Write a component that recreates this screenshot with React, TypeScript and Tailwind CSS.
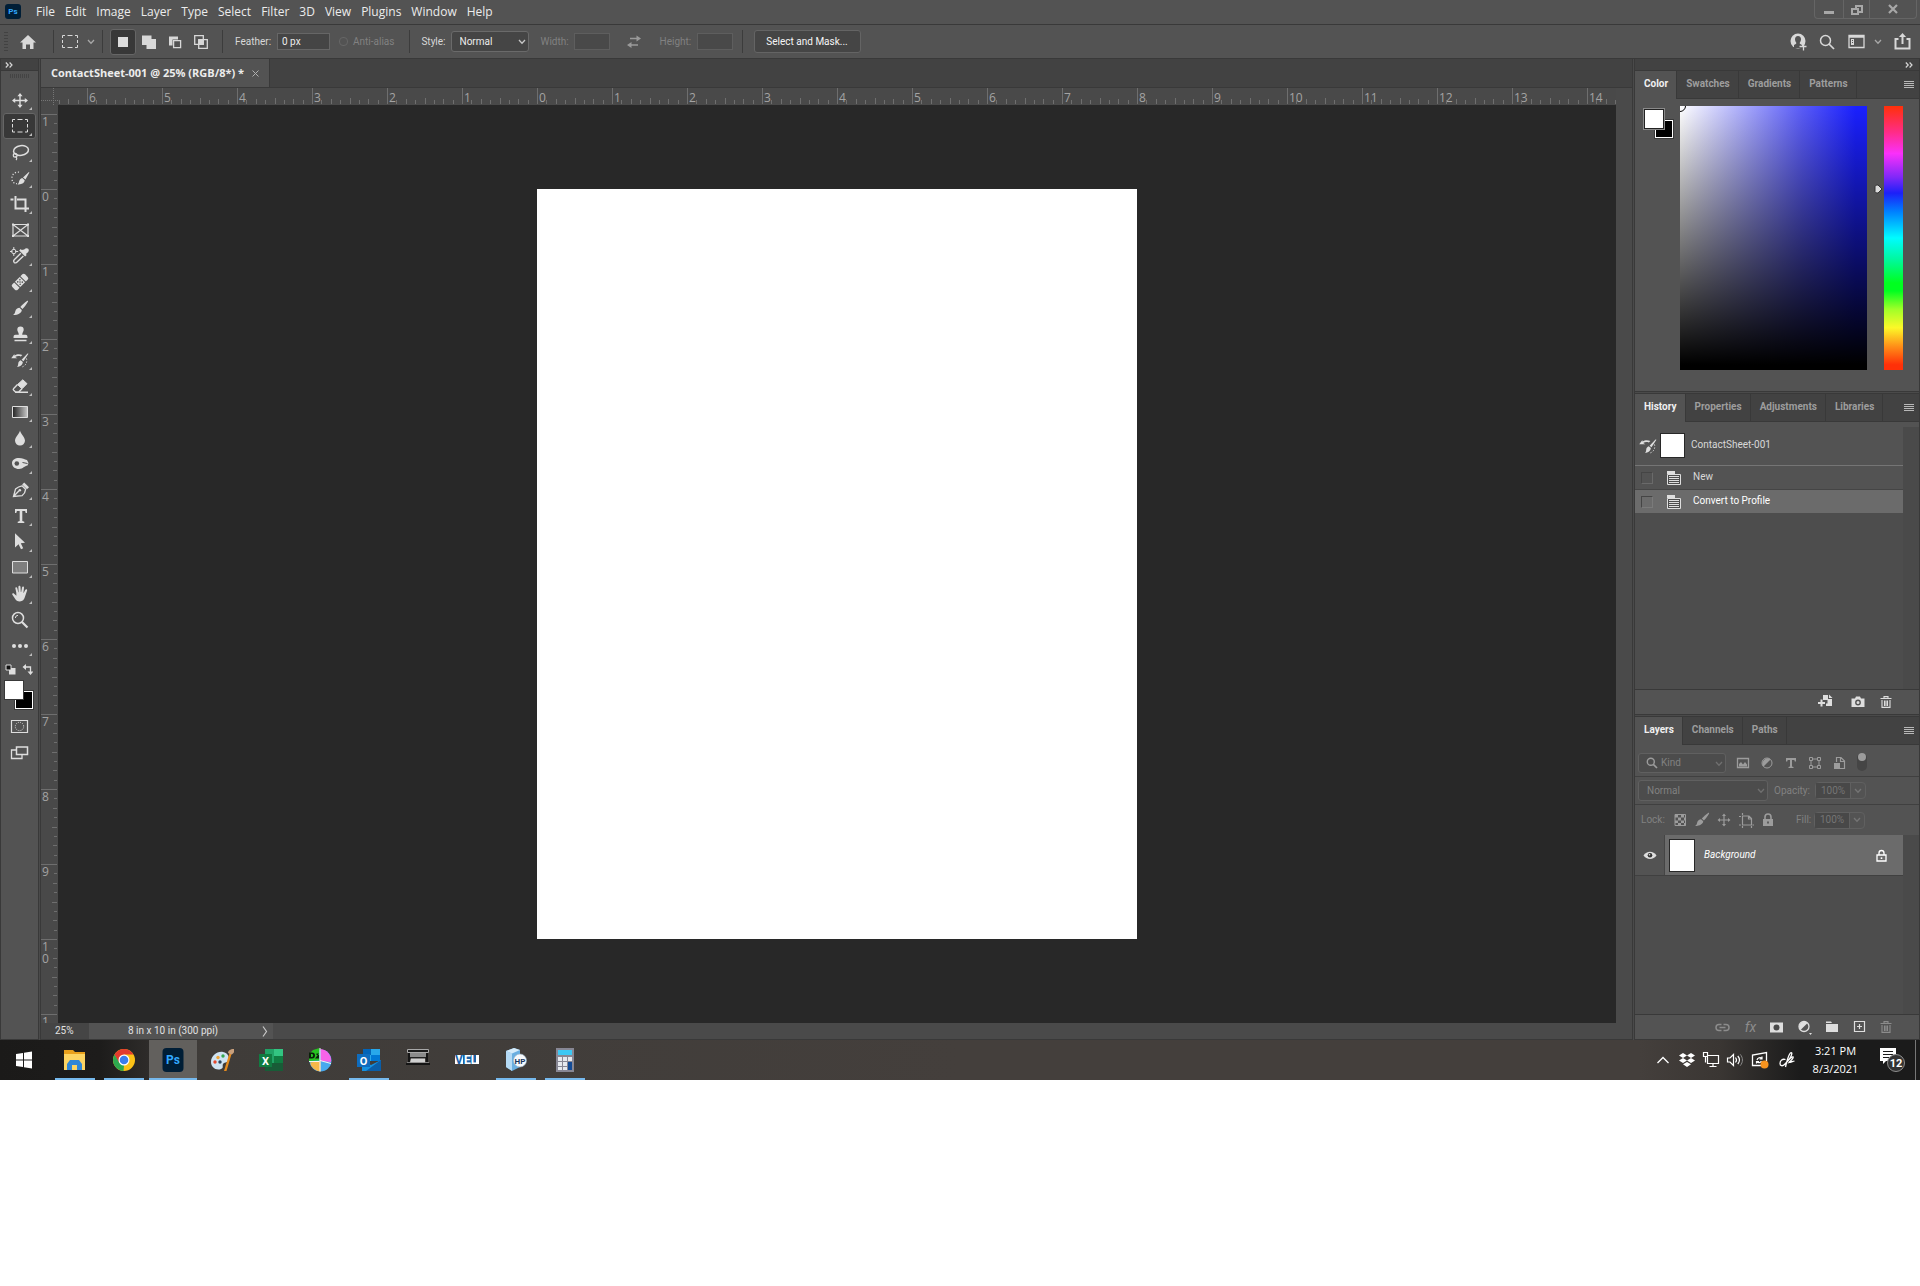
import React, { useState } from 'react';
import clsx from 'clsx';

const MENUS = ['File', 'Edit', 'Image', 'Layer', 'Type', 'Select', 'Filter', '3D', 'View', 'Plugins', 'Window', 'Help'];

const INCH = 75;

interface IconProps {
  size?: number;
  className?: string;
  children: React.ReactNode;
}

const Icon: React.FC<IconProps> = ({ size = 20, className, children }) => (
  <svg
    width={size}
    height={size}
    viewBox={`0 0 ${size} ${size}`}
    fill="none"
    stroke="currentColor"
    className={clsx('shrink-0', className)}
    aria-hidden="true"
  >
    {children}
  </svg>
);

const Chevron: React.FC<{ className?: string }> = ({ className }) => (
  <svg width="8" height="6" viewBox="0 0 8 6" fill="none" stroke="currentColor" strokeWidth="1.3" className={className} aria-hidden="true">
    <path d="M1 1l3 3.2L7 1" />
  </svg>
);

const DoubleChevron = () => (
  <svg width="8" height="6" viewBox="0 0 8 6" fill="none" stroke="#d6d6d6" strokeWidth="1.2" aria-hidden="true">
    <path d="M.8 .5L3.2 3 .8 5.500M4.600 .5L7 3 4.600 5.500" />
  </svg>
);

const Separator = () => <span className="h-[23px] w-px shrink-0 bg-[#3c3c3c]" />;

const BrushShape = () => (
  <path
    d="M17 3c.8-.5 1.300 0 .9.800-1.300 2.500-3.300 5-5.400 7.200L10.300 9C12.400 6.700 14.600 4.600 17 3zM9.500 9.700l2.300 2.200c-.1 2.700-3.300 5-8.800 5.100 1.500-1 1.900-1.900 2.300-3.700.5-2.200 2.300-3.500 4.200-3.600z"
    fill="currentColor"
    stroke="none"
  />
);

const HistoryBrushShape = () => (
  <>
    <path d="M17.500 3.500c.7-.3 1 .1.600.7l-4.600 7-1.900-1.500zM10.700 10.300l2.100 1.700c-.1 2.900-2.600 4.700-5.800 4.900 1-1 1-1.800 1.200-3.200.2-1.900 1.200-3 2.500-3.400z" fill="currentColor" stroke="none" />
    <path d="M1.200 8.200L4.400 4v1.400c3.100-1.800 5.800-1.200 8-.5l-1.600 1.500c-2.100-.7-4-.5-5.600.6l2.200 1.200z" fill="currentColor" stroke="none" />
    <path d="M16.500 8.500c.9 3.300-.5 7.300-4.500 8.500" strokeDasharray="1.200 1.800" />
  </>
);

interface Tool {
  id: string;
  icon: React.ReactNode;
  flyout?: boolean;
}

const TOOLS: Tool[] = [
  {
    id: 'Move',
    flyout: true,
    icon: (
      <>
        <path d="M10 4v12M3.500 10.500h13" strokeWidth="1.400" />
        <path d="M10 3l2.600 3.200H7.400zM10 18l-2.600-3.200h5.200zM2 10.500l3.200-2.600v5.200zM18 10.500l-3.200-2.600v5.200z" fill="currentColor" stroke="none" />
      </>
    ),
  },
  {
    id: 'Rectangular Marquee',
    flyout: true,
    icon: <path d="M2.500 6V3.500H5M7.500 3.500h5M15 3.500h2.500V6M17.500 8v3.500M17.500 13.500V16H15M12.500 16h-5M5 16H2.500v-2.500M2.500 11.500V8" />,
  },
  {
    id: 'Lasso',
    flyout: true,
    icon: (
      <>
        <ellipse cx="11" cy="8.500" rx="7.500" ry="4.800" strokeWidth="1.500" transform="rotate(-8 11 8.500)" />
        <circle cx="5.200" cy="13.300" r="1.900" strokeWidth="1.200" />
        <path d="M5.300 14.500c1.600.8 1.900 2.300.7 3.500" strokeWidth="1.200" />
      </>
    ),
  },
  {
    id: 'Quick Selection',
    flyout: true,
    icon: (
      <>
        <path d="M9 4.200A5.800 5.800 0 0 0 2 10.500C2 14 4.200 15.700 7 15.700" strokeDasharray="1.200 1.800" strokeWidth="1.300" />
        <path d="M18.600 4.200c.6-.3.900 0 .6.600l-3.700 6.800-2.500-2.200zM12.200 10l2.500 2.300c-.2 2.800-2.600 4.400-7.200 4.100 1.200-.8 1.300-1.700 1.600-2.900.4-1.900 1.500-3.200 3.100-3.500z" fill="currentColor" stroke="none" />
      </>
    ),
  },
  {
    id: 'Crop',
    flyout: true,
    icon: <path d="M.5 5.500h3M5.500 2v12.500h13.500M7 5.500h8.500V18" strokeWidth="2" />,
  },
  {
    id: 'Frame',
    icon: (
      <>
        <path d="M3 4.500h15v11.500H3zM3 4.500l15 11.500M18 4.500L3 16" strokeWidth="1.200" />
        <path d="M2 3.500h2v2H2zM17 3.500h2v2h-2zM2 15h2v2H2zM17 15h2v2h-2z" fill="currentColor" stroke="none" />
      </>
    ),
  },
  {
    id: 'Eyedropper',
    flyout: true,
    icon: (
      <>
        <circle cx="3.800" cy="5.500" r="2.200" />
        <path d="M3.800 1v3M3.800 7v3M-.5 5.500h3M5.200 5.500h3" />
        <path d="M14.200 3.600c1.200-1.500 3-1.800 4-.8s.7 2.800-.8 4l-1.500 1.200.8.900-1.600 1.500-5.900-5.800L10.800 3l.9.900z" fill="currentColor" stroke="none" />
        <path d="M10.800 7.300l-6.300 6.200c-1 1-.8 2.300-.3 2.900.7.700 2 .6 2.900-.3l6.300-6.200" strokeWidth="1.400" />
      </>
    ),
  },
  {
    id: 'Healing Brush',
    flyout: true,
    icon: (
      <g transform="rotate(-45 10 10)">
        <path d="M3 6.200h2.600v7.600H3a2 2 0 0 1-2-2V8.200a2 2 0 0 1 2-2zM14.400 6.200H17a2 2 0 0 1 2 2v3.600a2 2 0 0 1-2 2h-2.600z" fill="currentColor" stroke="none" />
        <path d="M6.600 6.200h6.800v7.600H6.600z" fill="currentColor" stroke="none" />
        <path d="M8.500 8.300h.1M11.500 8.300h.1M8.500 11.700h.1M11.500 11.700h.1M10 10h.1" stroke="#535353" strokeWidth="1.500" strokeLinecap="round" />
      </g>
    ),
  },
  { id: 'Brush', flyout: true, icon: <BrushShape /> },
  {
    id: 'Clone Stamp',
    flyout: true,
    icon: (
      <path d="M10.500 2.500a3.200 3.200 0 0 1 3.200 3.200c0 1.700-1.500 2.600-1.500 5H15.500c1.600 0 2 1.200 2 3.200H3.500c0-2 .4-3.200 2-3.200h3.300c0-2.400-1.500-3.300-1.500-5a3.200 3.200 0 0 1 3.200-3.200zM4.500 15.700h12V17.300h-12z" fill="currentColor" stroke="none" />
    ),
  },
  { id: 'History Brush', flyout: true, icon: <HistoryBrushShape /> },
  {
    id: 'Eraser',
    flyout: true,
    icon: (
      <>
        <path d="M12.800 3.800l4.200 3.900-5 5.100-4.500-4.200z" fill="currentColor" />
        <path d="M7.500 8.600l-3.800 3.800c-.6.600-.5 1.400 0 1.900l1.900 1.700h3L12 12.800M5 16.300h13" strokeWidth="1.400" />
      </>
    ),
  },
  {
    id: 'Gradient',
    flyout: true,
    icon: (
      <>
        <defs>
          <linearGradient id="tool-gradient">
            <stop offset="0" stopColor="#222" />
            <stop offset="1" stopColor="#c8c8c8" />
          </linearGradient>
        </defs>
        <path d="M2.500 4.500h15v11h-15z" fill="url(#tool-gradient)" />
      </>
    ),
  },
  { id: 'Blur', flyout: true, icon: <path d="M10 2.500c.6 3.600 5 6.500 5 10.300A4.900 4.900 0 0 1 10 17.500a4.900 4.900 0 0 1-5-4.700C5 9 9.400 6.100 10 2.500z" fill="currentColor" stroke="none" /> },
  {
    id: 'Dodge',
    flyout: true,
    icon: (
      <>
        <path d="M2 9c0-3 3-5 7-5 3.500 0 5.500 1.500 8 2l1.500 3-1 2.500c-3 .2-4.500 3.500-8.500 3.500C5 15 2 12.800 2 9z" fill="currentColor" stroke="none" />
        <circle cx="6.800" cy="9.500" r="2.300" fill="#535353" stroke="none" />
        <path d="M12.500 8.500l5 1" stroke="#535353" />
      </>
    ),
  },
  {
    id: 'Pen',
    flyout: true,
    icon: (
      <>
        <path d="M3.500 16.500L5.500 9c2-1.800 4-2.800 6.500-3.200l3.600 3.500c-.3 2.500-1.500 4.800-3.400 6.300zM3.500 16.500l5.300-5.500" strokeWidth="1.300" />
        <circle cx="9.800" cy="10.300" r="1.300" fill="currentColor" stroke="none" />
        <path d="M12.200 4.500l2-2 4.800 4.700-2 2z" fill="currentColor" stroke="none" />
      </>
    ),
  },
  { id: 'Type', flyout: true, icon: <path d="M5 3h12v4h-1.300l-.6-2H12.300v10l2 .7V17H7.700v-1.300l2-.7V5H6.900l-.6 2H5z" fill="currentColor" stroke="none" /> },
  { id: 'Path Selection', flyout: true, icon: <path d="M5 1.200l10 9.600-4.200.4 2.400 5-2.200 1-2.400-5L5 15.400z" fill="currentColor" stroke="none" /> },
  { id: 'Rectangle', flyout: true, icon: <path d="M2.500 3.500h15v11.500h-15z" fill="#7e7e7e" /> },
  {
    id: 'Hand',
    flyout: true,
    icon: (
      <path d="M6.300 8.800L5.400 4.600c-.3-1.400 1.500-1.800 1.900-.4l1 4.100.3-.1-.2-5.300c0-1.500 2-1.500 2.100 0l.3 5.200h.4l.8-4.700c.3-1.400 2.200-1.100 2 .4l-.6 4.900.4.100 1.500-3c.7-1.300 2.300-.5 1.800.8l-2.200 6.500c-.7 2.600-2.300 4.400-5 4.400-2.500 0-4-1-5-2.900L2.400 10.800c-.7-1.200.7-2.100 1.700-1.100l2.300 2z" fill="currentColor" stroke="none" />
    ),
  },
  {
    id: 'Zoom',
    icon: (
      <>
        <circle cx="8" cy="8" r="5.500" strokeWidth="1.500" />
        <path d="M5.300 8A2.900 2.900 0 0 1 8 5.300" />
        <path d="M12 12l5.500 5.500" strokeWidth="2.200" />
      </>
    ),
  },
  {
    id: 'More tools',
    flyout: true,
    icon: (
      <g fill="currentColor" stroke="none">
        <circle cx="4" cy="10" r="2" />
        <circle cx="10" cy="10" r="2" />
        <circle cx="16" cy="10" r="2" />
      </g>
    ),
  },
];

const HORIZONTAL_TICKS = Array.from({ length: 167 }, (_, i) => i - 51);
const VERTICAL_TICKS = Array.from({ length: 98 }, (_, i) => i - 8);

const tickLength = (n: number) => (n % 8 === 0 ? 17 : n % 4 === 0 ? 6 : n % 2 === 0 ? 5 : 4);

// Zero sits on the left edge of the page, which is centred in the canvas
const HorizontalRuler = () => (
  <svg className="h-[17px] min-w-0 flex-1" aria-hidden="true">
    <svg x="50%" overflow="visible">
      {HORIZONTAL_TICKS.map(n => {
        const x = Math.round((n * INCH) / 8) - 300;
        const len = tickLength(n);
        return (
          <g key={n}>
            <rect x={x} y={n % 8 === 0 ? 0 : 16 - len} width="1" height={n % 8 === 0 ? 16 : len} fill="#6e6e6e" />
            {n % 8 === 0 && (
              <text x={x + 2} y="14" fill="#a3a3a3" className="font-['Open_Sans',sans-serif] text-[12px]">
                {Math.abs(n / 8)}
              </text>
            )}
          </g>
        );
      })}
    </svg>
  </svg>
);

const VerticalRuler = () => (
  <svg className="w-[17px] shrink-0 self-stretch bg-[#494949]" aria-hidden="true">
    {VERTICAL_TICKS.map(n => {
      const y = Math.round((n * INCH) / 8) + 84;
      const len = n % 8 === 0 ? 16 : tickLength(n) - 1;
      // two-digit labels stack, and only the first digit of 11 is in view
      const digits = n === 88 ? ['1'] : String(Math.abs(n / 8)).split('');
      return (
        <g key={n}>
          <rect x={16 - len} y={y} width={len} height="1" fill="#6e6e6e" />
          {n % 8 === 0 && (
            <text fill="#a3a3a3" className="font-['Open_Sans',sans-serif] text-[12px]">
              {digits.map((digit, i) => (
                <tspan key={i} x="1" y={y + 12 + i * 12}>{digit}</tspan>
              ))}
            </text>
          )}
        </g>
      );
    })}
  </svg>
);

const MenuBar = () => (
  <header className="flex h-[25px] items-start border-b border-[#393939] bg-[#535353] pl-[5px]">
    <span className="mt-1 flex h-[15px] w-4 items-center justify-center rounded-[3px] bg-[#001e36] text-[8px] font-bold leading-none text-[#31a8ff]">Ps</span>
    <nav className="ml-[15px] flex h-6 items-center gap-[10px] font-['Open_Sans',sans-serif] text-[12px] leading-4 text-[#ececec]">
      {MENUS.map(menu => (
        <button key={menu} type="button">{menu}</button>
      ))}
    </nav>
    <div className="ml-auto mr-[3px] flex h-[19px] rounded-b-sm border border-t-0 border-[#656565] text-[#a8a8a8]">
      <button type="button" aria-label="Minimize" className="flex w-7 justify-center">
        <svg width="10" height="18" aria-hidden="true"><path d="M0 11h10v3H0z" fill="currentColor" /></svg>
      </button>
      <button type="button" aria-label="Restore" className="flex w-[27px] justify-center border-x border-[#656565]">
        <svg width="12" height="18" fill="none" stroke="currentColor" strokeWidth="2" aria-hidden="true">
          <path d="M5 8V6h6v6H8M1 9h6v5H1z" />
        </svg>
      </button>
      <button type="button" aria-label="Close" className="flex w-[46px] justify-center">
        <svg width="10" height="18" fill="none" stroke="currentColor" strokeWidth="2.200" aria-hidden="true"><path d="M1 5l8 8M9 5l-8 8" /></svg>
      </button>
    </div>
  </header>
);

const OptionsBar = () => (
  <div className="flex h-[34px] items-center border-b border-[#393939] bg-[#535353] text-[10px] leading-4 text-[#d8d8d8]">
    <span className="ml-1 h-5 w-1 bg-[repeating-linear-gradient(#424242_0_1px,transparent_1px_3px)]" />
    <button type="button" aria-label="Home" className="ml-3">
      <Icon size={16}><path d="M8 1l8 7.500h-2.500V15H10v-4.500H6V15H2.500V8.500H0z" fill="currentColor" stroke="none" /></Icon>
    </button>
    <span className="w-[17px]" />
    <Separator />
    <button type="button" aria-label="Tool presets" className="ml-2 flex items-center gap-[9px]">
      <Icon size={16}><path d="M.5 4V1.500H3M5.500 1.500h5M13 1.500h2.500V4M15.500 6v3M15.500 11v2.500H13M10.500 13.500h-5M3 13.500H.5V11M.5 9V6" /></Icon>
      <Chevron className="text-[#a8a8a8]" />
    </button>
    <span className="w-[7px]" />
    <Separator />
    <button type="button" aria-label="New selection" className="ml-[7px] flex h-[26px] w-[26px] items-center justify-center rounded-[3px] border border-[#666] bg-[#383838]">
      <span className="h-[10px] w-[10px] bg-[#dcdcdc]" />
    </button>
    <div className="ml-[5px] flex gap-[10px]">
      <button type="button" aria-label="Add to selection">
        <Icon size={16}><path d="M1 1.500h9.500v3.500H15v10H5.500v-4H1z" fill="currentColor" stroke="none" /></Icon>
      </button>
      <button type="button" aria-label="Subtract from selection">
        <Icon size={16}>
          <path d="M2 2.500h9v3H5.500v6H2z" fill="currentColor" stroke="none" />
          <path d="M6.600 6.600h7v7h-7z" strokeWidth="1.300" />
        </Icon>
      </button>
      <button type="button" aria-label="Intersect with selection">
        <Icon size={16}>
          <path d="M1.700 1.700h8.600v8.600H1.700zM5.700 5.700h8.600v8.600H5.700z" strokeWidth="1.300" />
          <path d="M6 6h4.300v4.300H6z" fill="currentColor" />
        </Icon>
      </button>
    </div>
    <span className="w-[13px]" />
    <Separator />
    <label htmlFor="feather" className="ml-3 w-[38px]">Feather:</label>
    <input id="feather" defaultValue="0 px" className="ml-1 h-[17px] w-[53px] border border-[#666] bg-[#454545] px-1 text-[#ececec]" />
    <label className="ml-[9px] flex items-center gap-[5px] text-[#818181]">
      <input type="checkbox" disabled className="h-[9px] w-[9px] appearance-none rounded-sm border border-[#666]" />
      Anti-alias
    </label>
    <span className="w-[15px]" />
    <Separator />
    <label htmlFor="style" className="ml-[11px]">Style:</label>
    <div className="relative ml-[5px]">
      <select id="style" className="block h-[21px] w-[78px] appearance-none rounded-[3px] border border-[#6a6a6a] bg-[#454545] pl-2 text-[#ececec]">
        <option>Normal</option>
        <option>Fixed Ratio</option>
        <option>Fixed Size</option>
      </select>
      <Chevron className="pointer-events-none absolute right-[3px] top-2 text-[#c8c8c8]" />
    </div>
    <label htmlFor="width" className="ml-3 w-[30px] text-[#818181]">Width:</label>
    <input id="width" disabled className="ml-[3px] h-[17px] w-9 border border-[#5e5e5e] bg-[#494949]" />
    <button type="button" aria-label="Swap width and height" className="ml-4 text-[#9a9a9a]">
      <Icon size={16}>
        <path d="M4 4.500h8M4 11h8" strokeWidth="1.400" />
        <path d="M10.500 1.500L15 4.500l-4.500 3zM5.500 8L1 11l4.500 3z" fill="currentColor" stroke="none" />
      </Icon>
    </button>
    <label htmlFor="height" className="ml-[18px] w-[33px] text-[#818181]">Height:</label>
    <input id="height" disabled className="ml-1 h-[17px] w-9 border border-[#5e5e5e] bg-[#494949]" />
    <span className="w-[9px]" />
    <Separator />
    <button type="button" className="ml-[11px] h-[23px] w-[107px] rounded-[3px] border border-[#646464] bg-[#454545] text-center text-[#f5f5f5]">Select and Mask...</button>

    <div className="ml-auto mr-[9px] flex items-center">
      <button type="button" aria-label="Account" className="mr-[11px]">
        <Icon size={18}>
          <circle cx="8" cy="8" r="7.500" fill="currentColor" stroke="none" />
          <path d="M8 3c2 0 3 1.300 3 3.200 0 1.600-.7 2.500-1.200 3.300v1.300L12 12v3H4v-3l2.200-1.200V9.500C5.700 8.700 5 7.800 5 6.200 5 4.300 6 3 8 3z" fill="#535353" stroke="none" />
          <path d="M9.500 13.500h7M13.500 10.500v7" strokeWidth="1.300" />
        </Icon>
      </button>
      <button type="button" aria-label="Search" className="mr-[13px]">
        <Icon size={16}>
          <circle cx="6.500" cy="6.500" r="5" strokeWidth="1.500" />
          <path d="M10 10l5 5" strokeWidth="1.700" />
        </Icon>
      </button>
      <button type="button" aria-label="Workspace" className="flex items-center gap-[9px]">
        <Icon size={17}>
          <path d="M1 2.500h15v12H1zM1 4h15" strokeWidth="1.300" />
          <path d="M3 6h3v6H3z" fill="currentColor" stroke="none" />
          <path d="M4 7.500h1M4 9.500h1" stroke="#535353" />
        </Icon>
        <Chevron className="text-[#a8a8a8]" />
      </button>
      <button type="button" aria-label="Share" className="ml-3">
        <Icon size={17}>
          <path d="M4.500 6H1.500v9.500h14V6h-3" strokeWidth="2" />
          <path d="M8.500 2.500v8.500" strokeWidth="2" />
          <path d="M8.500 0l3.600 4H4.900z" fill="currentColor" stroke="none" />
        </Icon>
      </button>
    </div>
  </div>
);

const Toolbar = () => {
  const [active, setActive] = useState('Rectangular Marquee');

  return (
    <aside className="flex w-[39px] shrink-0 flex-col border-x border-b border-[#393939] bg-[#535353] text-[#dedede]">
      <div className="flex h-3 items-center border-b border-[#393939] bg-[#424242] pl-1"><DoubleChevron /></div>
      <div className="flex h-4 justify-center pt-[3px]">
        <span className="h-1 w-[19px] bg-[repeating-linear-gradient(to_right,#444_0_1px,transparent_1px_2px)]" />
      </div>
      {TOOLS.map(tool => (
        <button
          key={tool.id}
          type="button"
          aria-label={tool.id}
          onClick={() => setActive(tool.id)}
          className={clsx(
            'relative ml-[2px] flex h-[26px] w-[33px] items-center justify-center rounded-[3px] border',
            active === tool.id ? 'border-[#666] bg-[#383838]' : 'border-transparent'
          )}
        >
          <Icon>{tool.icon}</Icon>
          {tool.flyout && (
            <svg width="3" height="3" className="absolute bottom-[2px] right-[3px]" aria-hidden="true"><path d="M3 0v3H0z" fill="#bdbdbd" /></svg>
          )}
        </button>
      ))}
      <div className="flex h-[21px] items-center justify-between pl-1 pr-[5px]">
        <button type="button" aria-label="Default colors">
          <Icon size={11}>
            <path d="M4 4h6.500v6.500H4z" fill="currentColor" stroke="none" />
            <path d="M1 1h5v5H1z" fill="#111" />
          </Icon>
        </button>
        <button type="button" aria-label="Switch colors">
          <Icon size={11}>
            <path d="M2.500 3h6v5.500" strokeWidth="1.300" />
            <path d="M4 0v6L.5 3zM5.500 7.500h6l-3 3.500z" fill="currentColor" stroke="none" />
          </Icon>
        </button>
      </div>
      <div className="relative ml-[3px] h-[30px] w-[30px]">
        <button type="button" aria-label="Background color" className="absolute bottom-0 right-0 h-5 w-5 border border-[#393939] bg-black shadow-[inset_0_0_0_1px_white]" />
        <button type="button" aria-label="Foreground color" className="absolute left-0 top-0 h-5 w-5 border border-[#393939] bg-white" />
      </div>
      <button type="button" aria-label="Quick mask" className="ml-[9px] mt-[6px]">
        <Icon>
          <path d="M1.500 4.500h16v12h-16z" strokeWidth="1.200" />
          <circle cx="9.500" cy="10.500" r="4.200" strokeDasharray="1 1.200" />
        </Icon>
      </button>
      <button type="button" aria-label="Screen mode" className="ml-[9px] mt-[6px]">
        <Icon>
          <path d="M6 8H1.500v8.500H12V13" strokeWidth="1.300" />
          <path d="M6.500 5h11v7.500h-11z" strokeWidth="1.500" />
        </Icon>
      </button>
    </aside>
  );
};

const DocumentArea = () => (
  <main className="flex min-w-0 flex-1 flex-col border-x border-b border-[#393939] bg-[#494949]">
    <div className="flex h-[29px] border-b border-[#393939] bg-[#424242]">
      <div className="flex items-center gap-2 border-r border-[#393939] bg-[#535353] px-[10px] font-['Open_Sans',sans-serif] text-[11px] font-bold leading-4 text-[#ececec]">
        <span className="whitespace-nowrap">ContactSheet-001 @ 25% (RGB/8*) *</span>
        <button type="button" aria-label="Close document">
          <svg width="7" height="7" stroke="#b0b0b0" aria-hidden="true"><path d="M.5 .5l6 6M6.500 .5l-6 6" /></svg>
        </button>
      </div>
    </div>
    <div className="flex">
      <div className="min-w-0 flex-1">
        <div className="flex bg-[#494949]">
          <svg width="17" height="17" stroke="#757575" strokeDasharray="1 1" className="shrink-0" aria-hidden="true">
            <path d="M12.500 0v17M0 12.500h17" />
          </svg>
          <HorizontalRuler />
        </div>
        <div className="flex">
          <VerticalRuler />
          <div className="flex flex-1 justify-center bg-[#282828] py-[84px]">
            <div className="h-[750px] w-[600px] bg-white" />
          </div>
        </div>
      </div>
      <div className="w-4 shrink-0 bg-[#4a4a4a]" />
    </div>
    <div className="flex h-4 items-center bg-[#4a4a4a] text-[10px] leading-4 text-[#e0e0e0]">
      <span className="w-12 self-stretch bg-[#454545] pl-[14px]">25%</span>
      <button type="button" className="flex w-[184px] items-center self-stretch bg-[#535353] pl-[39px] pr-[5px]">
        <span>8 in x 10 in (300 ppi)</span>
        <svg width="6" height="11" fill="none" stroke="#c8c8c8" strokeWidth="1.200" className="ml-auto" aria-hidden="true"><path d="M1 .5l3.500 5L1 10.500" /></svg>
      </button>
    </div>
  </main>
);

const PanelTabs: React.FC<{ tabs: string[] }> = ({ tabs }) => (
  <div className="flex h-7 shrink-0 bg-[#424242] font-bold">
    {tabs.map((tab, i) => (
      <button
        key={tab}
        type="button"
        className={clsx(
          'border-r border-[#393939] pl-[9px] pr-2',
          i === 0 ? 'bg-[#535353] pb-[3px] text-[#f0f0f0]' : 'border-b pb-[2px] text-[#9d9d9d]'
        )}
      >
        {tab}
      </button>
    ))}
    <div className="flex flex-1 items-center justify-end border-b border-[#393939] pr-[5px]">
      <button type="button" aria-label="Panel menu">
        <svg width="10" height="8" className="block" aria-hidden="true"><path d="M0 0h10v1H0zM0 2h10v1H0zM0 4h10v1H0zM0 6h10v1H0z" fill="#b8b8b8" /></svg>
      </button>
    </div>
  </div>
);

const ColorPanel = () => (
  <section>
    <PanelTabs tabs={['Color', 'Swatches', 'Gradients', 'Patterns']} />
    <div className="flex pb-[21px] pl-2 pr-4 pt-[7px]">
      <div className="relative mt-[2px] h-[31px] w-[31px] shrink-0">
        <button type="button" aria-label="Background color" className="absolute bottom-0 right-0 h-5 w-5 border border-[#393939] bg-black shadow-[inset_0_0_0_1px_white]" />
        <button type="button" aria-label="Foreground color" className="absolute left-0 top-0 h-[22px] w-[22px] border border-[#8a8a8a] bg-white shadow-[inset_0_0_0_1px_#222]" />
      </div>
      <div className="relative ml-[6px] h-[264px] flex-1 overflow-hidden bg-[linear-gradient(to_top,black_2%,transparent),linear-gradient(to_right,white,#5a5cf8_65%,#1a20ff_94%)]">
        <span className="absolute -left-[6px] -top-[6px] h-3 w-3 rounded-full border border-black" />
      </div>
      <svg width="9" height="10" className="ml-[7px] mr-px mt-[78px] shrink-0" aria-hidden="true"><path d="M1 2.500L2.500 1H4l4 4-4 4H2.500L1 7.500z" fill="#dcdcdc" stroke="#333" /></svg>
      <div className="h-[264px] w-[19px] shrink-0 bg-[linear-gradient(#ff3008,#ff2c88_10%,#fa30fa_18%,#8028f8_27%,#1c20f8_33%,#0080ff_40%,#00fcff_50%,#00f8a0_58%,#00ff20_67%,#00ff20_70%,#a0ff28_77%,#fcf828_84%,#ff9018_91%,#ff3008_98%)]" />
    </div>
  </section>
);

const DocIcon = () => (
  <Icon size={16} className="text-[#dedede]">
    <path d="M1.500 4.500h13v10h-13z" fill="#4d4d4d" />
    <path d="M1 1h8v3H1z" fill="currentColor" stroke="none" />
    <path d="M3 6.500h10M3 8.500h10M3 10.500h10M3 12.500h10" />
  </Icon>
);

const TrashIcon = () => (
  <Icon size={12}>
    <path d="M.5 2.500h11M4 2V.600h4V2M2 4v7.400h8V4M4.500 4.500v5.500M6 4.500v5.500M7.500 4.500v5.500" strokeWidth="1.100" />
  </Icon>
);

const HistoryPanel = () => (
  <section className="flex flex-col">
    <PanelTabs tabs={['History', 'Properties', 'Adjustments', 'Libraries']} />
    <div className="mt-[5px] flex h-[262px] text-[#d8d8d8]">
      <div className="flex-1 bg-[#4d4d4d]">
        <div className="flex h-[39px] items-center border-b border-[#757575] bg-[#535353] pb-px pl-[3px]">
          <Icon size={20} className="text-[#dedede]"><HistoryBrushShape /></Icon>
          <span className="ml-[2px] h-[25px] w-[25px] border border-[#282828] bg-white" />
          <span className="ml-[6px] pb-px">ContactSheet-001</span>
        </div>
        <div className="flex h-6 items-center border-b border-[#454545] bg-[#535353] pl-[6px]">
          <input type="checkbox" aria-label="Source for history brush: New" className="h-3 w-3 appearance-none border border-b-[#6a6a6a] border-l-[#454545] border-r-[#6a6a6a] border-t-[#454545]" />
          <span className="ml-[13px]"><DocIcon /></span>
          <span className="ml-[11px] pb-px">New</span>
        </div>
        <div className="flex h-[23px] items-center bg-[#6b6b6b] pl-[6px] text-white">
          <input type="checkbox" aria-label="Source for history brush: Convert to Profile" className="h-3 w-3 appearance-none border border-b-[#7a7a7a] border-l-[#454545] border-r-[#7a7a7a] border-t-[#454545]" />
          <span className="ml-[13px]"><DocIcon /></span>
          <span className="ml-[11px] pb-px">Convert to Profile</span>
        </div>
      </div>
      <div className="w-4 bg-[#4a4a4a]" />
    </div>
    <div className="flex h-[25px] items-center justify-end border-t border-[#393939] pr-[27px] text-[#dedede]">
      <button type="button" aria-label="New document from state" className="mr-[18px]">
        <Icon size={16}>
          <path d="M6 1h5v4h4v7H9V9.500h1.500V6H6z" fill="currentColor" stroke="none" />
          <path d="M12 .5L15.500 4H12z" fill="currentColor" stroke="none" />
          <path d="M1 9h7M4.500 5.500v7" strokeWidth="2" />
        </Icon>
      </button>
      <button type="button" aria-label="New snapshot" className="mr-[15px]">
        <Icon size={14}>
          <path d="M.5 3.500H4L5 1.500h4l1 2h3.500V12H.5z" fill="currentColor" stroke="none" />
          <circle cx="7" cy="7.500" r="2.200" stroke="#535353" strokeWidth="1.400" />
        </Icon>
      </button>
      <button type="button" aria-label="Delete state"><TrashIcon /></button>
    </div>
  </section>
);

const PercentField: React.FC<{ id: string }> = ({ id }) => (
  <div className="flex h-[17px] w-[51px] shrink-0 items-center rounded-sm border border-[#606060] text-[#757575]">
    <input id={id} disabled defaultValue="100%" className="h-[15px] w-[35px] border-r border-[#606060] bg-[#484848] text-center" />
    <Chevron className="mx-auto" />
  </div>
);

const LayersPanel = () => (
  <section className="flex flex-1 flex-col text-[#818181]">
    <PanelTabs tabs={['Layers', 'Channels', 'Paths']} />
    <div className="flex h-8 items-end border-b border-[#404040] pb-[3px] pl-[3px] text-[#9c9c9c]">
      <div className="relative">
        <select aria-label="Filter type" className="block h-5 w-[88px] appearance-none rounded-[3px] border border-[#606060] bg-[#4c4c4c] pl-[22px] text-[#818181]">
          <option>Kind</option>
          <option>Name</option>
        </select>
        <Icon size={12} className="pointer-events-none absolute left-2 top-1">
          <circle cx="4.800" cy="4.800" r="3.500" strokeWidth="1.400" />
          <path d="M7.300 7.300l3.700 3.700" strokeWidth="1.700" />
        </Icon>
        <Chevron className="pointer-events-none absolute right-[3px] top-2 text-[#707070]" />
      </div>
      <div className="ml-[9px] flex items-center gap-[8px] pb-[2px]">
        <Icon size={16}>
          <path d="M2.500 3.500h11v9h-11z" strokeWidth="1.300" />
          <path d="M4 11.500V9l2-2 2 2.500L10 7l2 2.500v2z" fill="currentColor" stroke="none" />
        </Icon>
        <Icon size={16}>
          <circle cx="8" cy="8" r="5" />
          <path d="M11.500 4.500A5 5 0 0 0 4.500 11.500z" fill="currentColor" stroke="none" />
        </Icon>
        <Icon size={16}><path d="M3 3h10v3.500h-1.200L11.300 5H9v6.500l1.500.5v1H5.500v-1l1.500-.5V5H4.700l-.5 1.500H3z" fill="currentColor" stroke="none" /></Icon>
        <Icon size={16}>
          <path d="M4 4h8v8H4z" />
          <path d="M2.500 2.500h3v3h-3zM10.500 2.500h3v3h-3zM2.500 10.500h3v3h-3zM10.500 10.500h3v3h-3z" fill="#535353" />
        </Icon>
        <Icon size={16}>
          <path d="M5.500 7V2.500H10L13.500 6v7.500H9M9.500 2.500v4h4" strokeWidth="1.200" />
          <path d="M3 8h6v6H3z" fill="currentColor" stroke="none" />
        </Icon>
      </div>
      <button type="button" aria-label="Layer filtering" className="mb-[2px] ml-[10px] flex h-[18px] w-[10px] items-start justify-center rounded-full bg-[#454545]">
        <span className="h-2 w-2 rounded-full bg-[#9c9c9c]" />
      </button>
    </div>
    <div className="flex h-7 items-center border-b border-[#404040] pl-[3px]">
      <div className="relative">
        <select aria-label="Blend mode" disabled className="block h-[21px] w-[130px] appearance-none rounded-[3px] border border-[#606060] bg-[#4c4c4c] pl-2 text-[#818181] opacity-100">
          <option>Normal</option>
        </select>
        <Chevron className="pointer-events-none absolute right-[3px] top-2 text-[#707070]" />
      </div>
      <label htmlFor="opacity" className="ml-[6px] w-[41px]">Opacity:</label>
      <PercentField id="opacity" />
    </div>
    <div className="flex h-[30px] items-center pl-[6px] text-[#9c9c9c]">
      <span className="w-[31px] text-[#818181]">Lock:</span>
      <div className="flex items-center gap-[6px]">
        <Icon size={16}>
          <path d="M3 2.500h10.500v11H3z" />
          <path d="M3 2.500h3v3H3zM9 2.500h3v3H9zM6 5.500h3v3H6zM3 8.500h3v2.500H3zM9 8.500h3v2.500H9zM6 11h3v2.500H6zM12 5.500h2v3h-2zM12 11h2v2.500h-2z" fill="currentColor" stroke="none" />
        </Icon>
        <svg width="16" height="16" viewBox="2 2 17 17" aria-hidden="true"><BrushShape /></svg>
        <Icon size={16}>
          <path d="M8 3v10M3 8h10" strokeWidth="1.200" />
          <path d="M8 1.500l2 2.500H6zM8 14.500L6 12h4zM1.500 8L4 6v4zM14.500 8L12 6v4z" fill="currentColor" stroke="none" />
        </Icon>
        <Icon size={16}><path d="M4.500 4h6.500l2.500 2.500V13h-9zM4.500 1v2M1 4.500h2M13.500 14v2M4.500 14v2M1 13h2M14.500 13H16M10.500 4v3h3" strokeWidth="1.200" /></Icon>
        <Icon size={16}>
          <path d="M3 7h10v7H3z" fill="currentColor" stroke="none" />
          <path d="M5 7V5a3 3 0 0 1 6 0v2" strokeWidth="1.600" />
          <path d="M8 9.500v2" stroke="#4d4d4d" strokeWidth="1.600" />
        </Icon>
      </div>
      <label htmlFor="fill" className="ml-5 w-[18px] text-[#818181]">Fill:</label>
      <PercentField id="fill" />
    </div>
    <div className="flex flex-1">
      <div className="flex-1 bg-[#4d4d4d]">
        <div className="flex h-[41px] border-b border-[#404040]">
          <button type="button" aria-label="Layer visibility" className="flex w-[30px] items-center justify-center border-r border-[#454545] bg-[#535353] text-[#dedede]">
            <Icon size={14}>
              <path d="M.5 7.500C3.500 2.500 10.500 2.500 13.500 7.500 10.500 12 3.500 12 .5 7.500z" fill="currentColor" stroke="none" />
              <circle cx="7" cy="7.300" r="2.300" fill="#333" stroke="none" />
              <circle cx="6.500" cy="6.800" r=".8" fill="currentColor" stroke="none" />
            </Icon>
          </button>
          <div className="flex flex-1 items-center bg-[#6b6b6b] pl-1 pr-[15px] text-white">
            <span className="h-[33px] w-[26px] border border-[#282828] bg-white" />
            <span className="ml-[9px] italic">Background</span>
            <Icon size={13} className="ml-auto">
              <path d="M2 6h9v6H2zM4 6V4a2.500 2.500 0 0 1 5 0v2" strokeWidth="1.300" />
              <path d="M5.700 8.300h1.600v1.700H5.700z" fill="currentColor" stroke="none" />
            </Icon>
          </div>
        </div>
      </div>
      <div className="w-4 bg-[#4a4a4a]" />
    </div>
    <div className="flex h-[25px] items-center justify-end gap-[11px] border-t border-[#393939] pr-[27px] text-[#dedede]">
      <button type="button" aria-label="Link layers" className="mr-[2px] text-[#8c8c8c]">
        <Icon size={15}><path d="M6.500 4.500H4a3 3 0 0 0 0 6h2.500M8.500 4.500H11a3 3 0 0 1 0 6H8.500M4.500 7.500h6" strokeWidth="1.500" /></Icon>
      </button>
      <button type="button" aria-label="Layer style" className="w-[15px] text-[14px] italic leading-4 text-[#8c8c8c]">fx</button>
      <button type="button" aria-label="Add mask">
        <Icon size={15}>
          <path d="M1 2.500h13v10H1z" fill="currentColor" stroke="none" />
          <circle cx="7.500" cy="7.500" r="3" fill="#4a4a4a" stroke="none" />
        </Icon>
      </button>
      <button type="button" aria-label="Adjustment layer" className="ml-[2px]">
        <Icon size={16}>
          <circle cx="7" cy="7.500" r="5" strokeWidth="1.300" />
          <path d="M10.600 4A5 5 0 0 0 3.500 11z" fill="currentColor" stroke="none" />
          <path d="M12 14h3l-1.500 2z" fill="currentColor" stroke="none" />
        </Icon>
      </button>
      <button type="button" aria-label="New group">
        <Icon size={16}><path d="M2 2.500h5L8 4H2zM2 5h12v8H2z" fill="currentColor" stroke="none" /></Icon>
      </button>
      <button type="button" aria-label="New layer" className="mr-[2px]">
        <Icon size={16}><path d="M3.500 2.500h10v10h-10zM8.500 5v5M6 7.500h5" strokeWidth="1.200" /></Icon>
      </button>
      <button type="button" aria-label="Delete layer" className="text-[#8c8c8c]"><TrashIcon /></button>
    </div>
  </section>
);

const PanelGap = () => <div className="h-[3px] shrink-0 border-y border-[#393939] bg-[#4a4a4a]" />;

const Panels = () => (
  <aside className="flex w-[286px] shrink-0 flex-col border-x border-b border-[#393939] bg-[#535353] text-[10px] leading-4">
    <div className="flex h-3 items-center justify-end border-b border-[#393939] bg-[#424242] pr-[6px]"><DoubleChevron /></div>
    <ColorPanel />
    <PanelGap />
    <HistoryPanel />
    <PanelGap />
    <LayersPanel />
  </aside>
);

interface TaskbarApp {
  name: string;
  running?: boolean;
  active?: boolean;
  icon: React.ReactNode;
}

const TASKBAR_APPS: TaskbarApp[] = [
  {
    name: 'File Explorer',
    running: true,
    icon: (
      <>
        <path d="M1 2h9l2 2h10v4H1z" fill="#e8a01c" />
        <path d="M1 6h21v16H1z" fill="#fcd462" />
        <path d="M4 22v-6l3-4h9l3 4v6h-5v-5H9v5z" fill="#2f86d6" />
      </>
    ),
  },
  {
    name: 'Chrome',
    running: true,
    icon: (
      <>
        <circle cx="12" cy="12" r="11" fill="#fbc116" />
        <path d="M2.500 6.500A11 11 0 0 1 21.500 6.500H12L6.500 15z" fill="#e33b2e" />
        <path d="M2.500 6.500L7.300 14.800 12 17.500 11.500 23A11 11 0 0 1 2.500 6.500z" fill="#2da94f" />
        <circle cx="12" cy="12" r="5.500" fill="#fff" />
        <circle cx="12" cy="12" r="4.300" fill="#3b7ded" />
      </>
    ),
  },
  {
    name: 'Photoshop',
    running: true,
    active: true,
    icon: (
      <>
        <rect x="1.500" y="0" width="21" height="24" rx="4" fill="#001e36" />
        <text x="12" y="16" textAnchor="middle" fill="#31a8ff" className="text-[12px] font-bold">Ps</text>
      </>
    ),
  },
  {
    name: 'Paint',
    icon: (
      <>
        <path d="M1 14c0-6 6-11 12-10 5 1 7 5 5 9-1 2-4 1-5 3s1 4-2 5c-5 2-10-2-10-7z" fill="#cfe3f2" />
        <circle cx="5" cy="14" r="1.700" fill="#e5482d" />
        <circle cx="8" cy="9.500" r="1.700" fill="#f0a53a" />
        <circle cx="13" cy="8" r="1.700" fill="#36a852" />
        <circle cx="10" cy="14" r="1.700" fill="#27435c" />
        <path d="M19.500 5l2 1-5 17h-2.500z" fill="#e58b1e" />
        <path d="M18 5c0-2 2-4 6-4 .5 3 0 4-2.500 5.500z" fill="#c9a07c" />
      </>
    ),
  },
  {
    name: 'Excel',
    icon: (
      <>
        <path d="M6 1h18v22H6z" fill="#21a366" />
        <path d="M15 1h9v7h-9z" fill="#33c481" />
        <path d="M15 8h9v7h-9z" fill="#107c41" />
        <path d="M6 15h18v8H6z" fill="#185c37" />
        <path d="M0 6h13v13H0z" fill="#107c41" />
        <text x="6.500" y="16.500" textAnchor="middle" fill="#fff" className="text-[11px] font-bold">X</text>
      </>
    ),
  },
  {
    name: 'Color utility',
    icon: (
      <>
        <circle cx="12.500" cy="12.500" r="11" fill="#48a9ee" />
        <path d="M12.500 13V1a11.500 11.500 0 0 1 10.500 13z" fill="#f763e8" />
        <path d="M12.500 13L2 14.500a11 11 0 0 0 10.500 9z" fill="#f6b84a" />
        <path d="M11.500 12.500V0L5 2 1 6v7z" fill="#26c321" />
        <path d="M12 0v23.500M1 13.500h10.500M12 12.500l11 3" stroke="#f4f4f4" strokeWidth="1" fill="none" />
        <path d="M1 4.500h3c2 0 3 1.200 3 3s-1 3-3 3H1zM3 6v3h1c1.500 0 1.500-3 0-3zM11 5.500H8.500v1.500H11v3.500H7" fill="#0a1f0a" />
      </>
    ),
  },
  {
    name: 'Outlook',
    running: true,
    icon: (
      <>
        <path d="M6 1h17v12H6z" fill="#28a8ea" />
        <path d="M6 1h8v6H6z" fill="#0364b8" />
        <path d="M14 7h9v6h-9z" fill="#0078d4" />
        <path d="M5 13l9 4 10-5v11H5z" fill="#1590df" />
        <path d="M24 12L9 23h15z" fill="#0a5ea8" />
        <path d="M0 6h13v13H0z" fill="#0f6cbd" />
        <text x="6.500" y="16.500" textAnchor="middle" fill="#fff" className="text-[11px] font-bold">O</text>
      </>
    ),
  },
  {
    name: 'Plotter',
    icon: (
      <>
        <path d="M1.500 1.500h21v3h-21z" fill="#1b1b1b" stroke="#a8a8a8" />
        <path d="M4 5h16v4H4z" fill="#8b8b8b" />
        <path d="M2 5h2v9H2zM20 5h2v9h-2z" fill="#151515" />
        <path d="M4 9h16v1.500H4z" fill="#222" />
        <path d="M5 10.500h14v4H4z" fill="#d0d0d0" />
        <path d="M0 15h24v2H0z" fill="#151515" />
        <path d="M1 14.500h22" stroke="#9a9a9a" strokeWidth=".7" />
      </>
    ),
  },
  {
    name: 'VEL',
    icon: (
      <>
        <path d="M0 7h24v9H0z" fill="#fff" />
        <path d="M8 7h13v9H8z" fill="#1c64a8" />
        <text x="0" y="16" fill="#1c64a8" className="text-[12px] font-bold">V</text>
        <text x="9" y="16" fill="#fff" className="text-[12px] font-bold">EL</text>
      </>
    ),
  },
  {
    name: 'HP',
    running: true,
    icon: (
      <>
        <path d="M2 3l8-3 6 2v17l-8 4-6-4z" fill="#6aaee0" />
        <path d="M2 3l6 2.500V23l-6-4z" fill="#b4daf5" />
        <path d="M2 3l8-3 6 2-8 3.500z" fill="#d6ebf9" />
        <circle cx="16" cy="12.500" r="6.500" fill="#f6f9fc" stroke="#9db6c8" strokeWidth=".6" />
        <text x="16" y="15.500" textAnchor="middle" fill="#17365c" className="text-[8px] font-bold">HP</text>
      </>
    ),
  },
  {
    name: 'Calculator',
    running: true,
    icon: (
      <>
        <path d="M3 0h18v24H3z" fill="#878794" />
        <path d="M5 2h14v5H5z" fill="#3cc8f4" />
        <path d="M5 9h4v4H5zM10 9h4v4h-4zM15 9h4v4h-4zM5 14h4v4H5zM10 14h4v4h-4zM5 19h4v3H5zM10 19h4v3h-4z" fill="#e6e9ef" />
        <path d="M15 14h4v8h-4z" fill="#134b96" />
      </>
    ),
  },
];

const Taskbar = () => (
  <footer className="flex h-10 items-stretch bg-[linear-gradient(to_right,#1b1a19,#1d1c1b_100px,#3f3c39_200px,#443f3c_50%,#443f3c_1640px,#3a3633_1720px,#1b1b1b_1800px)] text-white">
    <button type="button" aria-label="Start" className="mr-[3px] flex w-12 items-center justify-center">
      <svg width="16" height="18" aria-hidden="true"><path d="M0 3l7-1v6.500H0zM8 1.800L16 .500v8H8zM0 9.500h7V16l-7-1zM8 9.500h8v8l-8-1.200z" fill="#fff" /></svg>
    </button>
    <div className="flex gap-px">
      {TASKBAR_APPS.map(app => (
        <button
          key={app.name}
          type="button"
          aria-label={app.name}
          className={clsx('flex w-12 flex-col items-center', app.active && 'bg-[#62605d]')}
        >
          <svg width="24" height="24" className="mt-2" aria-hidden="true">{app.icon}</svg>
          {app.running && <span className={clsx('mt-auto h-[2px] bg-[#76b9ed]', app.active ? 'w-12' : 'w-10')} />}
        </button>
      ))}
    </div>

    <div className="ml-auto flex items-center">
      <button type="button" aria-label="Show hidden icons">
        <Icon size={16}><path d="M2.500 11L8 5.500l5.500 5.500" strokeWidth="1.300" /></Icon>
      </button>
      <Icon size={18} className="ml-[7px]">
        <path d="M5 2l4 2.500L5 7 1 4.500zM13 2l4 2.500L13 7 9 4.500zM5 7l4 2.500L5 12 1 9.500zM13 7l4 2.500-4 2.500-4-2.500zM9 11l4 2.300L9 16l-4-2.700z" fill="currentColor" stroke="none" />
      </Icon>
      <Icon size={18} className="ml-[6px]">
        <path d="M5.500 4.500h11v8h-11zM11 12.500V15M7.500 15.500h7M1.500 1.500h4v4h-4zM3.500 5.500v6" strokeWidth="1.200" />
      </Icon>
      <Icon size={18} className="ml-[6px]">
        <path d="M1.500 7h2.500l3.500-3.500v11L4 11H1.500zM9.500 6.500c1.200 1.500 1.200 3.500 0 5M11.800 5c2 2.400 2 5.600 0 8" strokeWidth="1.200" />
        <path d="M14.200 3.300c3 3.500 3 7.900 0 11.400" stroke="#8a8a8a" />
      </Icon>
      <Icon size={18} className="ml-[7px]">
        <path d="M15.500 10V1.500L1.500 4v10.500H10" strokeWidth="1.300" />
        <path d="M6 9a3 3 0 0 1 5-1.500M11 5.500v2.500H8.500M10.500 10A3 3 0 0 1 6 11M5.500 12.500V10.500H8" strokeWidth="1.200" />
        <circle cx="13.500" cy="13.500" r="4" fill="#f7931e" stroke="none" />
      </Icon>
      <Icon size={18} className="ml-[9px]">
        <path d="M7.500 8.500C4.500 7.500 2 9.500 2 12.500c0 2.500 2.500 3 4.500 1C9.500 10.500 13.500 5 13.800 2.800c.2-1.800-1.300-1.500-2 0C10 6 8.500 11.500 7.500 16M10.500 9c2.500-2.500 5.500-4.500 4.500-2-.8 1.800-3 3-4 4.500 1.500-.5 4-1 5.500-1.500" strokeWidth="1.300" />
      </Icon>
      <div className="ml-[15px] mr-[19px] w-[49px] text-center font-['Open_Sans',sans-serif] text-[11px] leading-[18px]">
        <p className="whitespace-nowrap">3:21 PM</p>
        <p className="whitespace-nowrap">8/3/2021</p>
      </div>
      <button type="button" aria-label="Notifications" className="mr-[9px]">
        <svg width="27" height="26" aria-hidden="true">
          <path d="M1 1h16v13H7l-3 3v-3H1z" fill="#fff" />
          <path d="M4 4.500h10M4 7.500h10M4 10.500h6" stroke="#1b1b1b" fill="none" />
          <circle cx="17" cy="16" r="8.500" fill="#333" stroke="#8f8f8f" />
          <text x="17" y="20" textAnchor="middle" fill="#fff" className="text-[11px] font-bold">12</text>
        </svg>
      </button>
      <span className="mr-1 w-px self-stretch bg-[#777]" />
    </div>
  </footer>
);

const App: React.FC = () => (
  <div className="font-[Roboto,'Open_Sans',sans-serif]">
    <div className="bg-[#4a4a4a] text-[#dcdcdc]">
      <MenuBar />
      <OptionsBar />
      <div className="flex gap-px">
        <Toolbar />
        <DocumentArea />
        <Panels />
      </div>
    </div>
    <Taskbar />
  </div>
);

export default App;
